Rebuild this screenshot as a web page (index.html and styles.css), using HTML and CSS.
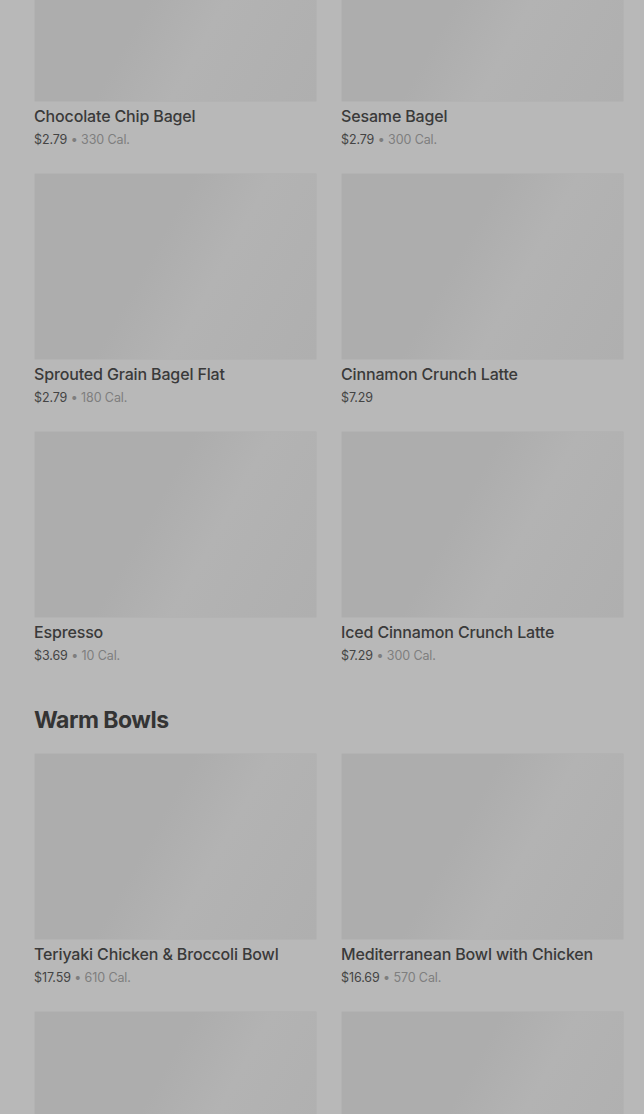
FILE: index.html
```html
<!DOCTYPE html>
<html lang="en">
<head>
    <meta charset="UTF-8">
    <meta name="viewport" content="width=device-width, initial-scale=1.0">
    <title>Menu</title>
    <link rel="stylesheet" href="styles.css">
</head>
<body>

<div class="menu">
    <!-- Bagels & drinks (scrolled) -->
    <div class="grid first">
        <div class="card">
            <div class="thumb"></div>
            <div class="name">Chocolate Chip Bagel</div>
            <div class="meta"><span class="price">$2.79</span> <span class="cal">• 330 Cal.</span></div>
        </div>
        <div class="card">
            <div class="thumb"></div>
            <div class="name">Sesame Bagel</div>
            <div class="meta"><span class="price">$2.79</span> <span class="cal">• 300 Cal.</span></div>
        </div>
        <div class="card">
            <div class="thumb"></div>
            <div class="name">Sprouted Grain Bagel Flat</div>
            <div class="meta"><span class="price">$2.79</span> <span class="cal">• 180 Cal.</span></div>
        </div>
        <div class="card">
            <div class="thumb"></div>
            <div class="name">Cinnamon Crunch Latte</div>
            <div class="meta"><span class="price">$7.29</span></div>
        </div>
        <div class="card">
            <div class="thumb"></div>
            <div class="name">Espresso</div>
            <div class="meta"><span class="price">$3.69</span> <span class="cal">• 10 Cal.</span></div>
        </div>
        <div class="card">
            <div class="thumb"></div>
            <div class="name">Iced Cinnamon Crunch Latte</div>
            <div class="meta"><span class="price">$7.29</span> <span class="cal">• 300 Cal.</span></div>
        </div>
    </div>

    <h2 class="section-title">Warm Bowls</h2>

    <div class="grid">
        <div class="card">
            <div class="thumb"></div>
            <div class="name">Teriyaki Chicken &amp; Broccoli Bowl</div>
            <div class="meta"><span class="price">$17.59</span> <span class="cal">• 610 Cal.</span></div>
        </div>
        <div class="card">
            <div class="thumb"></div>
            <div class="name">Mediterranean Bowl with Chicken</div>
            <div class="meta"><span class="price">$16.69</span> <span class="cal">• 570 Cal.</span></div>
        </div>
        <div class="card">
            <div class="thumb"></div>
        </div>
        <div class="card">
            <div class="thumb"></div>
        </div>
    </div>
</div>

</body>
</html>
```

FILE: styles.css
```css
body {
    margin: 0;
    padding: 0;
    background-color: #b8b8b8;
    font-family: Inter, "Noto Sans", sans-serif;
    overflow: hidden;
}

.menu {
    padding: 0 20px 0 34px;
    margin-top: -85px; /* Liste ist nach unten gescrollt */
}

.grid {
    display: grid;
    grid-template-columns: 283px 283px;
    column-gap: 24px;
    row-gap: 24px;
}

.thumb {
    height: 187px;
    box-sizing: border-box;
    border: 1px solid #b3b3b3;
    border-radius: 2px;
    background: linear-gradient(119deg, #adadad 0%, #adadad 42%, #b3b3b3 62%, #b1b1b1 80%, #afafaf 100%);
}

.name {
    margin-top: 4px;
    font-size: 16px;
    line-height: 20px;
    font-weight: 500;
    letter-spacing: -0.15px;
    color: #3a3a3a;
}

.meta {
    margin-top: 5px;
    font-size: 12.5px;
    line-height: 18px;
    letter-spacing: -0.1px;
}

.price {
    color: #444444;
}

.cal {
    color: #7e7e7e;
}

.section-title {
    margin: 39px 0 17px;
    font-size: 23px;
    line-height: 32px;
    font-weight: 700;
    letter-spacing: -0.5px;
    color: #343434;
}
```
